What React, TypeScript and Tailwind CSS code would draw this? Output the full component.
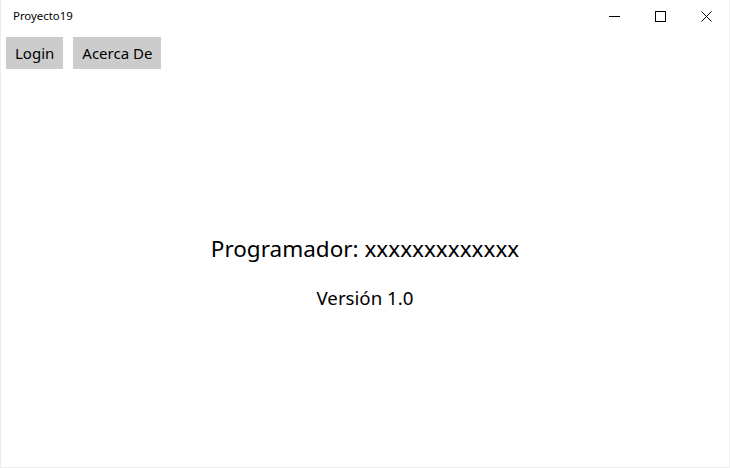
export default function App() {
  const font = { fontFamily: '"Segoe UI", "Noto Sans", "Open Sans", sans-serif' };
  return (
    <div className="w-[730px] h-[468px] bg-white flex flex-col border border-[#ededed] border-t-0 text-black" style={font}>
      <div className="h-8 flex items-center shrink-0">
        <div className="pl-3 text-[11.4px] flex-1">Proyecto19</div>
        <div className="flex h-8">
          <div className="w-[46px] flex items-center justify-center">
            <svg width="11" height="11" viewBox="0 0 11 11"><path d="M0 5.5H11" stroke="#000" strokeWidth="1" /></svg>
          </div>
          <div className="w-[46px] flex items-center justify-center">
            <svg width="11" height="11" viewBox="0 0 11 11"><rect x="0.5" y="0.5" width="10" height="10" fill="none" stroke="#000" strokeWidth="1" /></svg>
          </div>
          <div className="w-[46px] flex items-center justify-center">
            <svg width="11" height="11" viewBox="0 0 11 11"><path d="M0.5 0.5L10.5 10.5M10.5 0.5L0.5 10.5" stroke="#000" strokeWidth="1" /></svg>
          </div>
        </div>
      </div>
      <div className="flex gap-[10px] pl-[5px] pt-[5px] shrink-0">
        <div className="h-8 px-[9px] bg-[#cccccc] flex items-center text-[15px]">Login</div>
        <div className="h-8 px-[9px] bg-[#cccccc] flex items-center text-[15px]">Acerca De</div>
      </div>
      <div className="flex-1 flex flex-col items-center justify-center pt-[9px]">
        <div className="text-[22.5px] leading-8">Programador: xxxxxxxxxxxxx</div>
        <div className="text-[18.7px] leading-7 mt-[19px]">Versión 1.0</div>
      </div>
    </div>
  );
}
